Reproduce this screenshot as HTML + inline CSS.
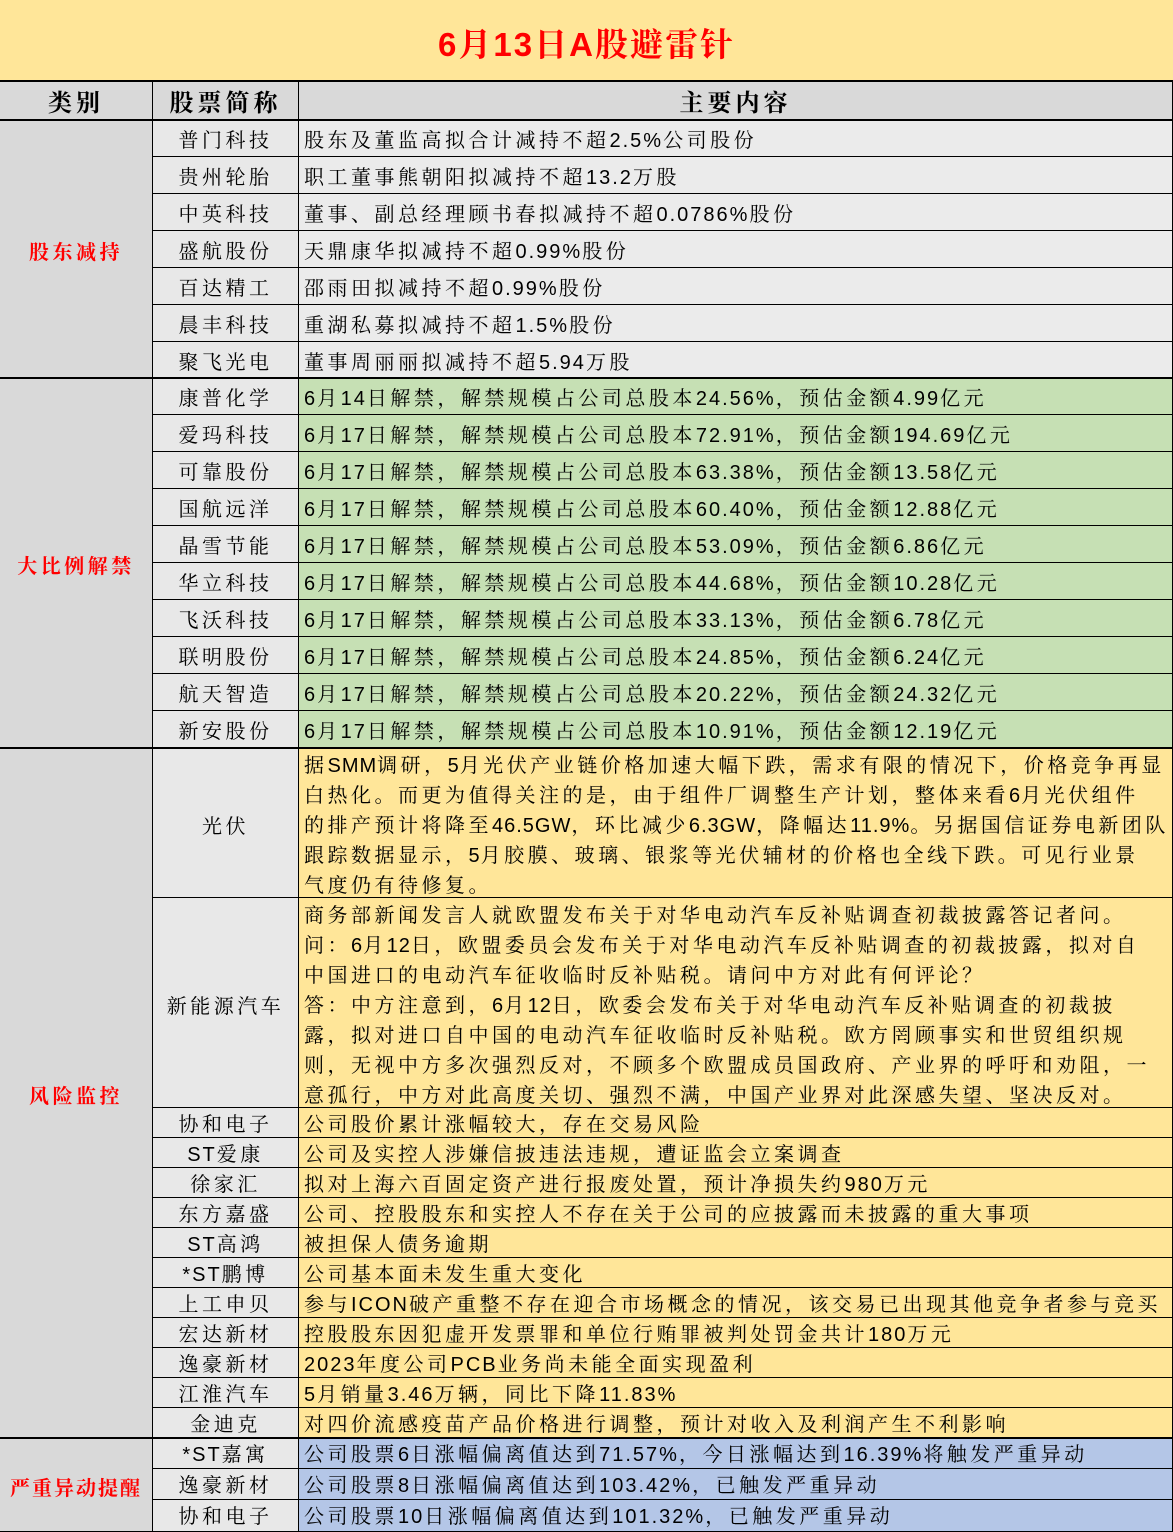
<!DOCTYPE html>
<html><head><meta charset="utf-8"><style>
*{margin:0;padding:0;box-sizing:border-box}
body{width:1173px;height:1532px;background:#fff;position:relative;overflow:hidden;font-family:"Liberation Sans","Noto Serif CJK SC",serif;color:#000}
.c{position:absolute;border-right:1px solid #000;border-bottom:1px solid #000;white-space:nowrap;overflow:hidden;font-size:20px;letter-spacing:3.5px}
.l{letter-spacing:2px}
.p .l{letter-spacing:1px}
.a{left:0;width:153px;background:#d9d9d9;color:#f00;font-weight:bold;text-align:center;display:flex;align-items:center;justify-content:center;padding-top:4px}
.b{left:153px;width:146px;background:#e8e8e8;text-align:center}
.t{left:299px;width:874px;padding-left:5px}
.g1{background:#ebebeb}.gr{background:#c6e0b4}.ye{background:#ffe699}.bl{background:#b4c6e7}
.p{line-height:30px;padding-top:3px}
.h{position:absolute;left:0;width:1173px;height:2px;background:#000}
.r37{height:37px;line-height:42px}
.r30{height:30px;line-height:34px}
.r31{height:31px;line-height:35px}
</style></head><body>
<div style="position:absolute;left:0;top:0;width:1173px;height:82px;background:#ffe699;border-bottom:2px solid #000;color:#f00;font-weight:bold;font-size:33px;text-align:center;line-height:90px;letter-spacing:2px">6月13日A股避雷针</div>
<div class="c" style="left:0;width:153px;top:82px;height:38px;background:#d9d9d9;font-weight:bold;font-size:24px;text-align:center;line-height:44px;letter-spacing:4px">类别</div>
<div class="c" style="left:153px;width:146px;top:82px;height:38px;background:#d9d9d9;font-weight:bold;font-size:24px;text-align:center;line-height:44px;letter-spacing:4px">股票简称</div>
<div class="c" style="left:299px;width:874px;top:82px;height:38px;background:#d9d9d9;font-weight:bold;font-size:24px;text-align:center;line-height:44px;letter-spacing:4px">主要内容</div>

<div class="c a" style="top:120px;height:258px">股东减持</div>
<div class="c b r37" style="top:120px">普门科技</div><div class="c t g1 r37" style="top:120px">股东及董监高拟合计减持不超<span class="l">2.5%</span>公司股份</div>
<div class="c b r37" style="top:157px">贵州轮胎</div><div class="c t g1 r37" style="top:157px">职工董事熊朝阳拟减持不超<span class="l">13.2</span>万股</div>
<div class="c b r37" style="top:194px">中英科技</div><div class="c t g1 r37" style="top:194px">董事、副总经理顾书春拟减持不超<span class="l">0.0786%</span>股份</div>
<div class="c b r37" style="top:231px">盛航股份</div><div class="c t g1 r37" style="top:231px">天鼎康华拟减持不超<span class="l">0.99%</span>股份</div>
<div class="c b r37" style="top:268px">百达精工</div><div class="c t g1 r37" style="top:268px">邵雨田拟减持不超<span class="l">0.99%</span>股份</div>
<div class="c b r37" style="top:305px">晨丰科技</div><div class="c t g1 r37" style="top:305px">重湖私募拟减持不超<span class="l">1.5%</span>股份</div>
<div class="c b r37" style="top:342px;height:36px">聚飞光电</div><div class="c t g1 r37" style="top:342px;height:36px">董事周丽丽拟减持不超<span class="l">5.94</span>万股</div>

<div class="c a" style="top:378px;height:370px">大比例解禁</div>
<div class="c b r37" style="top:378px">康普化学</div><div class="c t gr r37" style="top:378px"><span class="l">6</span>月<span class="l">14</span>日解禁，解禁规模占公司总股本<span class="l">24.56%</span>，预估金额<span class="l">4.99</span>亿元</div>
<div class="c b r37" style="top:415px">爱玛科技</div><div class="c t gr r37" style="top:415px"><span class="l">6</span>月<span class="l">17</span>日解禁，解禁规模占公司总股本<span class="l">72.91%</span>，预估金额<span class="l">194.69</span>亿元</div>
<div class="c b r37" style="top:452px">可靠股份</div><div class="c t gr r37" style="top:452px"><span class="l">6</span>月<span class="l">17</span>日解禁，解禁规模占公司总股本<span class="l">63.38%</span>，预估金额<span class="l">13.58</span>亿元</div>
<div class="c b r37" style="top:489px">国航远洋</div><div class="c t gr r37" style="top:489px"><span class="l">6</span>月<span class="l">17</span>日解禁，解禁规模占公司总股本<span class="l">60.40%</span>，预估金额<span class="l">12.88</span>亿元</div>
<div class="c b r37" style="top:526px">晶雪节能</div><div class="c t gr r37" style="top:526px"><span class="l">6</span>月<span class="l">17</span>日解禁，解禁规模占公司总股本<span class="l">53.09%</span>，预估金额<span class="l">6.86</span>亿元</div>
<div class="c b r37" style="top:563px">华立科技</div><div class="c t gr r37" style="top:563px"><span class="l">6</span>月<span class="l">17</span>日解禁，解禁规模占公司总股本<span class="l">44.68%</span>，预估金额<span class="l">10.28</span>亿元</div>
<div class="c b r37" style="top:600px">飞沃科技</div><div class="c t gr r37" style="top:600px"><span class="l">6</span>月<span class="l">17</span>日解禁，解禁规模占公司总股本<span class="l">33.13%</span>，预估金额<span class="l">6.78</span>亿元</div>
<div class="c b r37" style="top:637px">联明股份</div><div class="c t gr r37" style="top:637px"><span class="l">6</span>月<span class="l">17</span>日解禁，解禁规模占公司总股本<span class="l">24.85%</span>，预估金额<span class="l">6.24</span>亿元</div>
<div class="c b r37" style="top:674px">航天智造</div><div class="c t gr r37" style="top:674px"><span class="l">6</span>月<span class="l">17</span>日解禁，解禁规模占公司总股本<span class="l">20.22%</span>，预估金额<span class="l">24.32</span>亿元</div>
<div class="c b r37" style="top:711px">新安股份</div><div class="c t gr r37" style="top:711px"><span class="l">6</span>月<span class="l">17</span>日解禁，解禁规模占公司总股本<span class="l">10.91%</span>，预估金额<span class="l">12.19</span>亿元</div>

<div class="c a" style="top:748px;height:690px">风险监控</div>
<div class="c b" style="top:748px;height:150px;line-height:158px">光伏</div>
<div class="c t ye p" style="top:748px;height:150px">据<span class="l">SMM</span>调研，<span class="l">5</span>月光伏产业链价格加速大幅下跌，需求有限的情况下，价格竞争再显<br>白热化。而更为值得关注的是，由于组件厂调整生产计划，整体来看<span class="l">6</span>月光伏组件<br>的排产预计将降至<span class="l">46.5GW</span>，环比减少<span class="l">6.3GW</span>，降幅达<span class="l">11.9%</span>。另据国信证券电新团队<br>跟踪数据显示，<span class="l">5</span>月胶膜、玻璃、银浆等光伏辅材的价格也全线下跌。可见行业景<br>气度仍有待修复。</div>
<div class="c b" style="top:898px;height:210px;line-height:218px">新能源汽车</div>
<div class="c t ye p" style="top:898px;height:210px">商务部新闻发言人就欧盟发布关于对华电动汽车反补贴调查初裁披露答记者问。<br>问：<span class="l">6</span>月<span class="l">12</span>日，欧盟委员会发布关于对华电动汽车反补贴调查的初裁披露，拟对自<br>中国进口的电动汽车征收临时反补贴税。请问中方对此有何评论？<br>答：中方注意到，<span class="l">6</span>月<span class="l">12</span>日，欧委会发布关于对华电动汽车反补贴调查的初裁披<br>露，拟对进口自中国的电动汽车征收临时反补贴税。欧方罔顾事实和世贸组织规<br>则，无视中方多次强烈反对，不顾多个欧盟成员国政府、产业界的呼吁和劝阻，一<br>意孤行，中方对此高度关切、强烈不满，中国产业界对此深感失望、坚决反对。</div>
<div class="c b r30" style="top:1108px">协和电子</div><div class="c t ye r30" style="top:1108px">公司股价累计涨幅较大，存在交易风险</div>
<div class="c b r30" style="top:1138px"><span class="l">ST</span>爱康</div><div class="c t ye r30" style="top:1138px">公司及实控人涉嫌信披违法违规，遭证监会立案调查</div>
<div class="c b r30" style="top:1168px">徐家汇</div><div class="c t ye r30" style="top:1168px">拟对上海六百固定资产进行报废处置，预计净损失约<span class="l">980</span>万元</div>
<div class="c b r30" style="top:1198px">东方嘉盛</div><div class="c t ye r30" style="top:1198px">公司、控股股东和实控人不存在关于公司的应披露而未披露的重大事项</div>
<div class="c b r30" style="top:1228px"><span class="l">ST</span>高鸿</div><div class="c t ye r30" style="top:1228px">被担保人债务逾期</div>
<div class="c b r30" style="top:1258px"><span class="l">*ST</span>鹏博</div><div class="c t ye r30" style="top:1258px">公司基本面未发生重大变化</div>
<div class="c b r30" style="top:1288px">上工申贝</div><div class="c t ye r30" style="top:1288px">参与<span class="l">ICON</span>破产重整不存在迎合市场概念的情况，该交易已出现其他竞争者参与竞买</div>
<div class="c b r30" style="top:1318px">宏达新材</div><div class="c t ye r30" style="top:1318px">控股股东因犯虚开发票罪和单位行贿罪被判处罚金共计<span class="l">180</span>万元</div>
<div class="c b r30" style="top:1348px">逸豪新材</div><div class="c t ye r30" style="top:1348px"><span class="l">2023</span>年度公司<span class="l">PCB</span>业务尚未能全面实现盈利</div>
<div class="c b r30" style="top:1378px">江淮汽车</div><div class="c t ye r30" style="top:1378px"><span class="l">5</span>月销量<span class="l">3.46</span>万辆，同比下降<span class="l">11.83%</span></div>
<div class="c b r30" style="top:1408px">金迪克</div><div class="c t ye r30" style="top:1408px">对四价流感疫苗产品价格进行调整，预计对收入及利润产生不利影响</div>

<div class="c a" style="top:1438px;height:94px;letter-spacing:2px">严重异动提醒</div>
<div class="c b r31" style="top:1438px"><span class="l">*ST</span>嘉寓</div><div class="c t bl r31" style="top:1438px">公司股票<span class="l">6</span>日涨幅偏离值达到<span class="l">71.57%</span>，今日涨幅达到<span class="l">16.39%</span>将触发严重异动</div>
<div class="c b r31" style="top:1469px">逸豪新材</div><div class="c t bl r31" style="top:1469px">公司股票<span class="l">8</span>日涨幅偏离值达到<span class="l">103.42%</span>，已触发严重异动</div>
<div class="c b r31" style="top:1500px;height:32px">协和电子</div><div class="c t bl r31" style="top:1500px;height:32px">公司股票<span class="l">10</span>日涨幅偏离值达到<span class="l">101.32%</span>，已触发严重异动</div>

<div class="h" style="top:119px"></div>
<div class="h" style="top:377px"></div>
<div class="h" style="top:747px"></div>
<div class="h" style="top:1437px"></div>
</body></html>
